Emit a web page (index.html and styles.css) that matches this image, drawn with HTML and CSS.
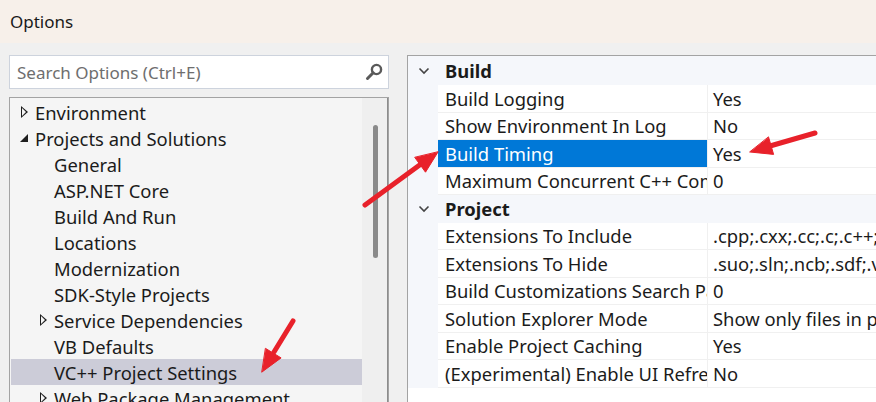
FILE: index.html
```html
<!DOCTYPE html>
<html>
<head>
<meta charset="utf-8">
<link rel="stylesheet" href="styles.css">
</head>
<body>
<div class="window">
  <div class="titlebar">Options</div>
  <div class="content">
    <div class="left">
      <div class="search">
        <span class="placeholder">Search Options (Ctrl+E)</span>
        <svg class="search-icon" width="20" height="20" viewBox="0 0 20 20">
          <circle cx="12.5" cy="7.5" r="4.6" fill="none" stroke="#5a5a5a" stroke-width="2.4"/>
          <line x1="9.2" y1="10.8" x2="3.5" y2="16.5" stroke="#5a5a5a" stroke-width="3" stroke-linecap="round"/>
        </svg>
      </div>
      <div class="tree">
        <div class="tree-list">
          <div class="item"><span class="tw tw-closed"></span>Environment</div>
          <div class="item"><span class="tw tw-open"></span>Projects and Solutions</div>
          <div class="item child"><span class="tw"></span>General</div>
          <div class="item child"><span class="tw"></span>ASP.NET Core</div>
          <div class="item child"><span class="tw"></span>Build And Run</div>
          <div class="item child"><span class="tw"></span>Locations</div>
          <div class="item child"><span class="tw"></span>Modernization</div>
          <div class="item child"><span class="tw"></span>SDK-Style Projects</div>
          <div class="item child"><span class="tw tw-closed"></span>Service Dependencies</div>
          <div class="item child"><span class="tw"></span>VB Defaults</div>
          <div class="item child selected"><span class="tw"></span>VC++ Project Settings</div>
          <div class="item child"><span class="tw tw-closed"></span>Web Package Management</div>
        </div>
        <div class="scrollbar"><div class="thumb"></div></div>
      </div>
    </div>
    <div class="right">
      <div class="row cat cat-first">
        <div class="margin"><svg width="12" height="8" viewBox="0 0 12 8"><polyline points="1.5,1.5 6,6 10.5,1.5" fill="none" stroke="#444" stroke-width="1.6"/></svg></div>
        <div class="cat-name">Build</div>
      </div>
      <div class="row"><div class="margin"></div><div class="name">Build Logging</div><div class="value">Yes</div></div>
      <div class="row"><div class="margin"></div><div class="name">Show Environment In Log</div><div class="value">No</div></div>
      <div class="row"><div class="margin"></div><div class="name sel">Build Timing</div><div class="value">Yes</div></div>
      <div class="row"><div class="margin"></div><div class="name">Maximum Concurrent C++ Compilation</div><div class="value">0</div></div>
      <div class="row cat">
        <div class="margin"><svg width="12" height="8" viewBox="0 0 12 8"><polyline points="1.5,1.5 6,6 10.5,1.5" fill="none" stroke="#444" stroke-width="1.6"/></svg></div>
        <div class="cat-name">Project</div>
      </div>
      <div class="row"><div class="margin"></div><div class="name">Extensions To Include</div><div class="value">.cpp;.cxx;.cc;.c;.c++;.cppm;.ixx;.inl;.h;.hpp</div></div>
      <div class="row"><div class="margin"></div><div class="name">Extensions To Hide</div><div class="value">.suo;.sln;.ncb;.sdf;.vcxproj;.vcxproj.filters</div></div>
      <div class="row"><div class="margin"></div><div class="name">Build Customizations Search Path</div><div class="value">0</div></div>
      <div class="row"><div class="margin"></div><div class="name">Solution Explorer Mode</div><div class="value">Show only files in project</div></div>
      <div class="row"><div class="margin"></div><div class="name">Enable Project Caching</div><div class="value">Yes</div></div>
      <div class="row"><div class="margin"></div><div class="name">(Experimental) Enable UI Refresh Optimizations</div><div class="value">No</div></div>
    </div>
  </div>
  <svg class="arrows" width="876" height="402" viewBox="0 0 876 402">
    <g stroke="#e8212a" stroke-width="5" stroke-linecap="round" fill="#e8212a">
      <line x1="365" y1="205" x2="421" y2="164"/>
      <polygon points="438,152 425.5,172.2 414.9,157.6" stroke-width="1" stroke-linejoin="round"/>
      <line x1="815" y1="133" x2="770" y2="146"/>
      <polygon points="750,152 773.6,154.4 768.6,137.2" stroke-width="1" stroke-linejoin="round"/>
      <line x1="293" y1="321" x2="274" y2="352"/>
      <polygon points="262,372 281.1,357.9 265.7,348.5" stroke-width="1" stroke-linejoin="round"/>
    </g>
  </svg>
</div>
</body>
</html>
```
FILE: styles.css
```css
* { box-sizing: border-box; }
html, body { margin: 0; padding: 0; }
body {
  width: 876px;
  height: 402px;
  overflow: hidden;
  font-family: "Noto Sans", "Open Sans", sans-serif;
  font-size: 18.4px;
  color: #1b1b1b;
  background: #f0f0f0;
}
.window { position: relative; width: 876px; height: 402px; display: flex; flex-direction: column; }
.titlebar {
  height: 43px;
  flex: none;
  background: #f7f0ea;
  padding-left: 10px;
  display: flex;
  align-items: center;
  font-size: 17px;
  color: #1a1a1a;
}
.content {
  flex: 1;
  display: flex;
  padding: 12px 0 0 9px;
  min-height: 0;
}
.left {
  width: 380px;
  flex: none;
  display: flex;
  flex-direction: column;
  gap: 8px;
}
.search {
  height: 34px;
  flex: none;
  background: #fff;
  border: 1px solid #cdd3dd;
  display: flex;
  align-items: center;
  justify-content: space-between;
  padding: 0 4px 0 7px;
  font-size: 17px;
}
.placeholder { color: #6e6e6e; }
.tree {
  flex: 1;
  border: 1px solid #a3a3a3;
  border-bottom: none;
  display: flex;
  background: #f5f5f5;
  min-height: 0;
}
.tree-list { flex: 1; padding: 1px 0 0 1px; overflow: hidden; }
.item {
  height: 26px;
  display: flex;
  align-items: center;
  padding-left: 8px;
  white-space: nowrap;
}
.item.child { padding-left: 27px; }
.item.selected { background: #ccccd8; }
.tw { width: 16px; height: 12px; flex: none; position: relative; margin-right: 0; }
.tw-closed::before {
  content: "";
  position: absolute;
  left: 2px; top: 0;
  width: 0; height: 0;
  border-top: 6px solid transparent;
  border-bottom: 6px solid transparent;
  border-left: 7px solid #1e1e1e;
}
.tw-closed::after {
  content: "";
  position: absolute;
  left: 3px; top: 2px;
  width: 0; height: 0;
  border-top: 4px solid transparent;
  border-bottom: 4px solid transparent;
  border-left: 4.6px solid #f5f5f5;
}
.tw-open::before {
  content: "";
  position: absolute;
  left: 1px; top: 2px;
  width: 0; height: 0;
  border-left: 8px solid transparent;
  border-bottom: 8px solid #1e1e1e;
}
.scrollbar {
  width: 26px;
  flex: none;
  background: #efefef;
  border-right: 1px solid #8c8c8c;
  padding-top: 27px;
  display: flex;
  justify-content: center;
}
.thumb { width: 5px; height: 133px; background: #8a8a8a; border-radius: 3px; margin-left: 1px; }
.right {
  margin-left: 18px;
  flex: 1;
  background: #fff;
  border-left: 1px solid #a3a3a3;
  border-top: 1px solid #a3a3a3;
  display: flex;
  flex-direction: column;
  min-width: 0;
}
.row {
  height: 27.5px;
  flex: none;
  display: grid;
  grid-template-columns: 30px 270px 1fr;
}
.row.cat { background: #f5f7fb; grid-template-columns: 30px 1fr; }
.row.cat-first { height: 29px; }
.margin {
  background: #f5f7fb;
  display: flex;
  align-items: center;
  justify-content: center;
  padding-left: 2px;
}
.cat-name {
  font-weight: bold;
  display: flex;
  align-items: center;
  padding-left: 7px;
}
.name, .value {
  display: flex;
  align-items: center;
  padding-left: 7px;
  white-space: nowrap;
  overflow: hidden;
  border-bottom: 1px solid #f0f0f0;
}
.name { border-right: 1px solid #f0f0f0; padding-left: 7px; }
.value { padding-left: 5px; }
.name.sel { background: #0078d7; color: #fff; }
.arrows { position: absolute; left: 0; top: 0; pointer-events: none; }
```
